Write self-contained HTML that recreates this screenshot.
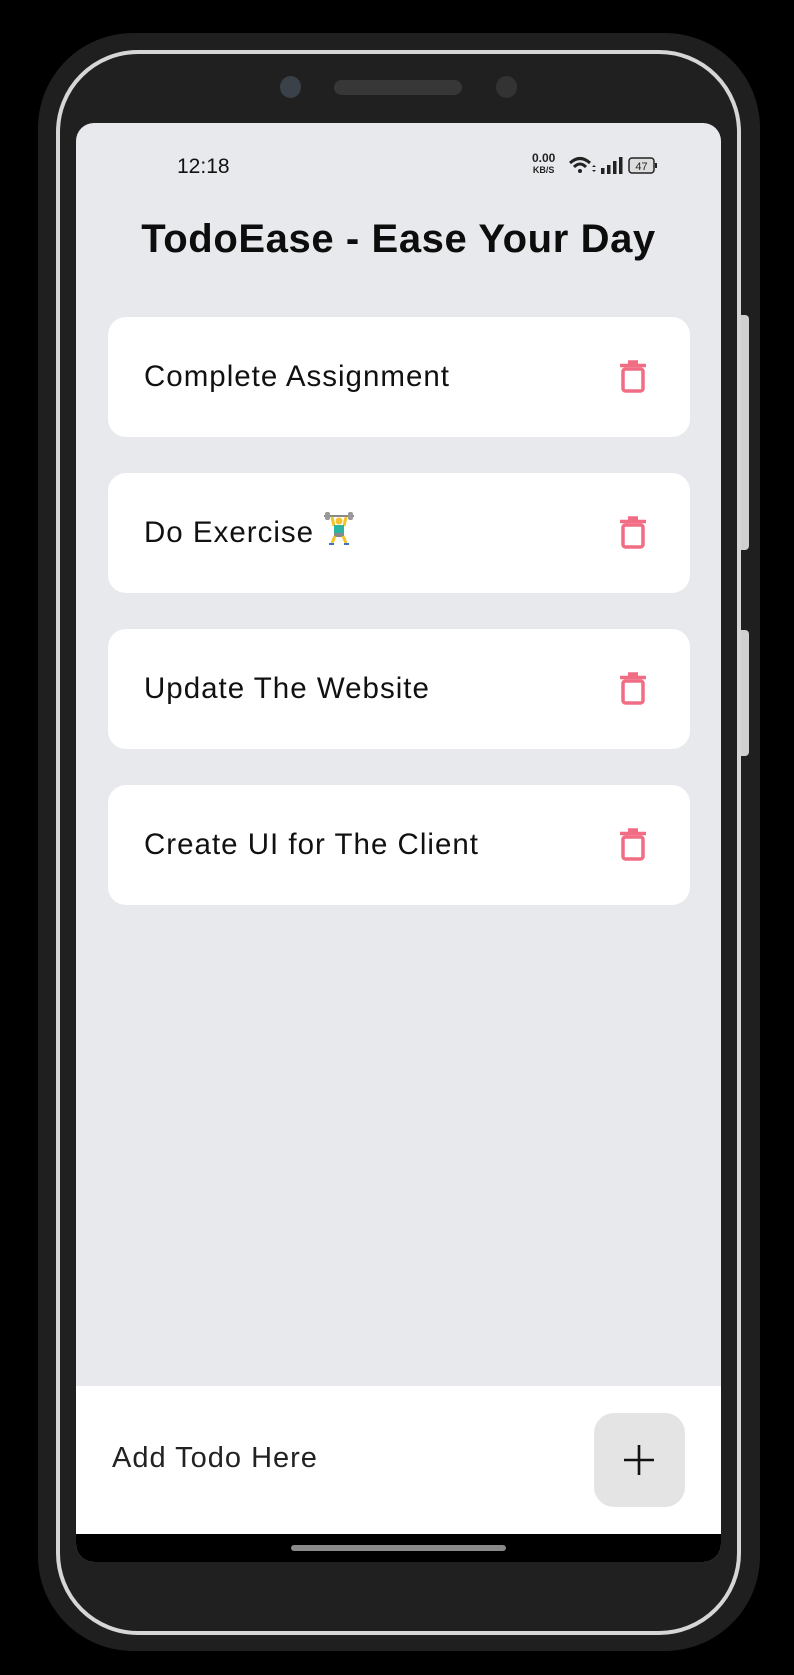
<!DOCTYPE html>
<html><head><meta charset="utf-8"><style>
*{margin:0;padding:0;box-sizing:border-box}
html,body{width:794px;height:1675px;background:#000;overflow:hidden;font-family:"Liberation Sans",sans-serif}
.abs{position:absolute}
.outer{left:38px;top:33px;width:722px;height:1618px;border-radius:95px;background:#1f1f1f}
.silver{left:56px;top:50px;width:685px;height:1585px;border-radius:82px;border:4px solid #d6d6d6;background:#202020}
.side{background:#cfcfcf;border-radius:0 4px 4px 0;width:8px;left:741px}
.screen{left:76px;top:123px;width:645px;height:1439px;border-radius:18px;background:#e8e9ec;overflow:hidden}
.card{position:absolute;left:32px;width:582px;height:120px;background:#fff;border-radius:18px}
.card .t{position:absolute;left:36px;top:0;line-height:120px;font-size:29.5px;letter-spacing:1px;color:#111}
.card>svg{position:absolute;left:511px;top:42px}
</style></head><body>
<div class="abs outer"></div>
<div class="abs silver"></div>
<div class="abs side" style="top:315px;height:235px"></div>
<div class="abs side" style="top:630px;height:126px"></div>
<div class="abs" style="left:280px;top:76px;width:21px;height:22px;border-radius:50%;background:#3a4148"></div>
<div class="abs" style="left:334px;top:80px;width:128px;height:15px;border-radius:8px;background:#373737"></div>
<div class="abs" style="left:496px;top:76px;width:21px;height:22px;border-radius:50%;background:#333"></div>
<div class="abs screen">
  <div class="abs" style="left:101px;top:32px;font-size:21px;color:#111">12:18</div>
  <div class="abs" style="left:456px;top:30px;font-size:12px;font-weight:bold;color:#222;line-height:11px;text-align:center">0.00<br><span style="font-size:9px">KB/S</span></div>
  <svg class="abs" style="left:492px;top:32px" width="90" height="22" viewBox="0 0 90 22">
    <path d="M2 8 Q12 -1 22 8" stroke="#222" stroke-width="3" fill="none"/>
    <path d="M6 12 Q12 6 18 12" stroke="#222" stroke-width="3" fill="none"/>
    <circle cx="12" cy="16" r="2" fill="#222"/>
    <path d="M24 12 l2 -2 l2 2z M24 15 l2 2 l2 -2z" fill="#222"/>
    <rect x="33" y="13" width="3.5" height="6" fill="#222"/><rect x="39" y="10" width="3.5" height="9" fill="#222"/><rect x="45" y="6" width="3.5" height="13" fill="#222"/><rect x="51" y="2" width="3.5" height="17" fill="#222"/>
    <rect x="61" y="3" width="25" height="15" rx="3" fill="#ddd" stroke="#222" stroke-width="1.5"/>
    <rect x="87" y="8" width="2" height="5" fill="#222"/>
    <text x="73.5" y="15" font-size="11" text-anchor="middle" fill="#222" font-family="Liberation Sans">47</text>
  </svg>
  <div class="abs" style="left:0;width:645px;top:94px;text-align:center;font-size:40px;font-weight:bold;color:#0d0d0d;letter-spacing:0.6px">TodoEase - Ease Your Day</div>

  <div class="card" style="top:194px"><div class="t">Complete Assignment</div><svg width="28" height="34" viewBox="0 0 28 34"><path d="M9 3h10M1 6.5h26" stroke="#f06d84" stroke-width="3.5"/><rect x="4" y="10" width="20" height="22" rx="2.5" fill="none" stroke="#f06d84" stroke-width="3.5"/></svg></div>
  <div class="card" style="top:350px"><div class="t">Do Exercise <svg style="position:relative;left:0;top:4px" width="32" height="34" viewBox="0 0 32 34"><rect x="1" y="3" width="30" height="2" fill="#888"/><rect x="2" y="0" width="5" height="8" rx="2" fill="#999"/><rect x="25" y="0" width="5" height="8" rx="2" fill="#999"/><path d="M9 5 L11 14 M23 5 L21 14" stroke="#f4c22a" stroke-width="3"/><circle cx="16" cy="9" r="3.5" fill="#f4c22a"/><rect x="11" y="13" width="10" height="9" fill="#2bb5a0"/><rect x="11" y="21" width="10" height="4" fill="#888"/><path d="M12 24 L9 31 M20 24 L23 31" stroke="#f4c22a" stroke-width="3"/><path d="M6 32h5M21 32h5" stroke="#3a70d0" stroke-width="2"/></svg></div><svg width="28" height="34" viewBox="0 0 28 34"><path d="M9 3h10M1 6.5h26" stroke="#f06d84" stroke-width="3.5"/><rect x="4" y="10" width="20" height="22" rx="2.5" fill="none" stroke="#f06d84" stroke-width="3.5"/></svg></div>
  <div class="card" style="top:506px"><div class="t">Update The Website</div><svg width="28" height="34" viewBox="0 0 28 34"><path d="M9 3h10M1 6.5h26" stroke="#f06d84" stroke-width="3.5"/><rect x="4" y="10" width="20" height="22" rx="2.5" fill="none" stroke="#f06d84" stroke-width="3.5"/></svg></div>
  <div class="card" style="top:662px"><div class="t">Create UI for The Client</div><svg width="28" height="34" viewBox="0 0 28 34"><path d="M9 3h10M1 6.5h26" stroke="#f06d84" stroke-width="3.5"/><rect x="4" y="10" width="20" height="22" rx="2.5" fill="none" stroke="#f06d84" stroke-width="3.5"/></svg></div>

  <div class="abs" style="left:0;top:1263px;width:645px;height:148px;background:#fff">
    <div class="abs" style="left:36px;top:0;line-height:144px;font-size:29px;color:#222;letter-spacing:1px">Add Todo Here</div>
    <div class="abs" style="left:518px;top:27px;width:91px;height:94px;border-radius:20px;background:#e4e4e4"></div>
    <svg class="abs" style="left:547px;top:58px" width="32" height="32"><path d="M16 1v30M1 16h30" stroke="#111" stroke-width="2.6"/></svg>
  </div>
  <div class="abs" style="left:0;top:1411px;width:645px;height:28px;background:#000"></div>
  <div class="abs" style="left:215px;top:1422px;width:215px;height:6px;border-radius:3px;background:#8a8a8a"></div>
</div>
</body></html>
